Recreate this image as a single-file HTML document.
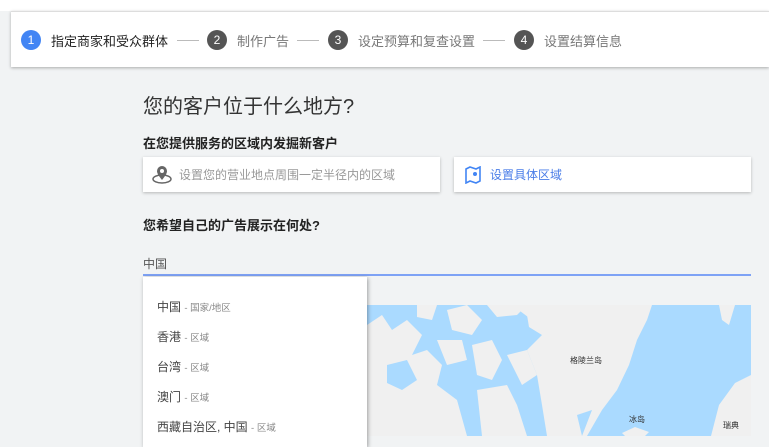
<!DOCTYPE html>
<html><head><meta charset="utf-8"><style>
*{margin:0;padding:0;box-sizing:border-box}
body{width:769px;height:436px;overflow:hidden;background:#f1f3f4;font-family:"Liberation Sans","Noto Sans CJK SC",sans-serif;position:relative}
.top{position:absolute;left:0;top:0;width:769px;height:11px;background:#fff}
.hdr{position:absolute;left:11px;top:11px;width:758px;height:56px;background:#fff;box-shadow:0 1px 3px rgba(0,0,0,.3);border-top:1px solid #ddd}
.step{position:absolute;top:18px;display:flex;align-items:center;font-size:13px;color:#777}
.c{width:20px;height:20px;border-radius:50%;background:#555;color:#fff;font-size:12px;text-align:center;line-height:20px;margin-right:10px}
.ln{position:absolute;top:28px;height:1px;background:#bbb;width:22px}
.abs{position:absolute}
.card{position:absolute;top:157px;height:35px;background:#fff;box-shadow:0 1px 3px rgba(0,0,0,.25);font-size:12px;display:flex;align-items:center}
.dd{position:absolute;left:143px;top:277px;width:224px;height:170px;background:#fff;box-shadow:1px 1px 4px rgba(0,0,0,.35)}
.it{position:absolute;left:14px;font-size:12px;color:#444}
.it small{font-size:9.5px;color:#888}
</style></head><body>
<div class="top"></div>
<div class="hdr">
<div class="step" style="left:10px"><div class="c" style="background:#4285f4">1</div><span style="color:#222">指定商家和受众群体</span></div>
<div class="ln" style="left:166px"></div>
<div class="step" style="left:196px"><div class="c">2</div>制作广告</div>
<div class="ln" style="left:286px"></div>
<div class="step" style="left:317px"><div class="c">3</div>设定预算和复查设置</div>
<div class="ln" style="left:472px"></div>
<div class="step" style="left:503px"><div class="c">4</div>设置结算信息</div>
</div>
<div class="abs" style="left:143px;top:90px;font-size:20px;color:#333">您的客户位于什么地方?</div>
<div class="abs" style="left:143px;top:133px;font-size:13px;color:#222;font-weight:bold">在您提供服务的区域内发掘新客户</div>
<div class="card" style="left:143px;width:297px"><svg width="22" height="20" style="margin:0 6px 0 8px" viewBox="0 0 22 20"><ellipse cx="11" cy="14" rx="9" ry="4" fill="none" stroke="#666" stroke-width="1.5"/><path d="M11 15 C7 10 6 8 6 6 a5 5 0 0 1 10 0 c0 2-1 4-5 9z" fill="#666"/><circle cx="11" cy="6" r="2" fill="#fff"/></svg><span style="color:#999">设置您的营业地点周围一定半径内的区域</span></div>
<div class="card" style="left:454px;width:297px"><svg width="18" height="18" style="margin:0 8px 0 10px" viewBox="0 0 18 18"><path d="M2 3 L6 1 L12 3 L16 1 V15 L12 17 L6 15 L2 17Z" fill="none" stroke="#4285f4" stroke-width="1.6"/><circle cx="11" cy="8" r="2" fill="#4285f4"/></svg><span style="color:#4a7de8">设置具体区域</span></div>
<div class="abs" style="left:143px;top:215px;font-size:13px;color:#222;font-weight:bold">您希望自己的广告展示在何处?</div>
<div class="abs" style="left:143px;top:255px;font-size:12px;color:#555">中国</div>
<div class="abs" style="left:143px;top:274px;width:608px;height:2px;background:#7ea2f5"></div>
<svg class="abs" style="left:367px;top:305px" width="384" height="131" viewBox="0 0 384 131">
<rect width="384" height="131" fill="#aadaff"/>
<path d="M0 20 L15 10 L25 25 L40 15 L55 30 L45 50 L60 45 L75 60 L70 80 L90 95 L100 131 L0 131Z" fill="#f0f0f0"/>
<path d="M20 60 L40 55 L50 75 L35 85 L20 78Z" fill="#aadaff"/>
<path d="M50 0 L70 0 L65 15 L50 12Z M80 5 L100 0 L115 15 L105 30 L85 25Z M70 35 L95 35 L100 55 L80 60Z M105 40 L125 35 L135 55 L125 75 L110 70Z M110 85 L140 80 L150 100 L160 131 L115 131Z M140 50 L160 45 L170 70 L155 80Z" fill="#f0f0f0"/>
<path d="M120 0 L160 0 L150 10 L130 12Z M160 10 L180 5 L190 20 L175 30 L162 22Z" fill="#f0f0f0"/>
<path d="M145 0 L285 0 L280 15 L270 35 L262 60 L250 85 L235 105 L220 131 L180 131 L175 100 L170 70 L160 45 L175 30 L165 15Z" fill="#f0f0f0"/>
<path d="M210 110 L225 105 L215 131Z" fill="#aadaff"/>
<path d="M255 128 L268 122 L282 127 L278 131 L258 131Z" fill="#f0f0f0"/>
<path d="M352 0 L368 0 L362 20 L355 15Z M344 131 L352 100 L368 78 L384 70 L384 131Z" fill="#f0f0f0"/>
<text x="203" y="58" font-size="8" fill="#333" font-family="Noto Sans CJK SC,sans-serif">格陵兰岛</text>
<text x="262" y="117" font-size="8" fill="#333" font-family="Noto Sans CJK SC,sans-serif">冰岛</text>
<text x="356" y="123" font-size="8" fill="#333" font-family="Noto Sans CJK SC,sans-serif">瑞典</text>
</svg>
<div class="dd">
<div class="it" style="top:21px">中国 <small>- 国家/地区</small></div>
<div class="it" style="top:51px">香港 <small>- 区域</small></div>
<div class="it" style="top:81px">台湾 <small>- 区域</small></div>
<div class="it" style="top:111px">澳门 <small>- 区域</small></div>
<div class="it" style="top:141px">西藏自治区, 中国 <small>- 区域</small></div>
</div>
</body></html>
